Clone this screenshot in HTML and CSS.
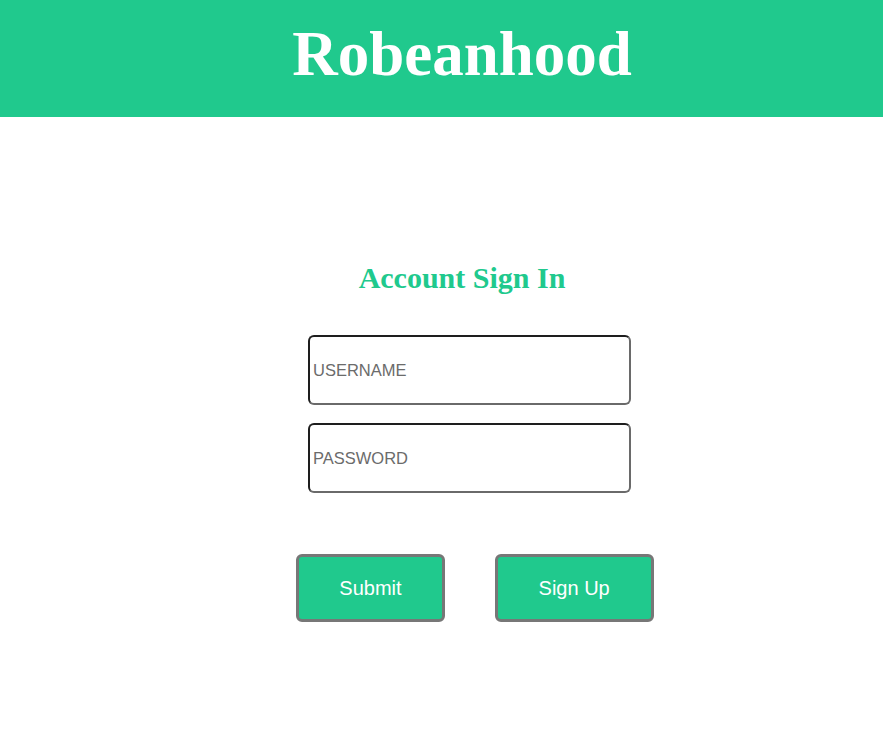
FILE: index.html
```html
<!DOCTYPE html>
<html lang="en">
<head>
<meta charset="utf-8">
<title>Robeanhood</title>
<link rel="stylesheet" href="styles.css">
</head>
<body>
<header class="banner">
  <h1 class="brand">Robeanhood</h1>
</header>
<main class="signin">
  <h2 class="signin-title">Account Sign In</h2>
  <form class="signin-form">
    <div class="fields">
      <input class="field" type="text" placeholder="USERNAME">
      <input class="field" type="password" placeholder="PASSWORD">
    </div>
    <div class="actions">
      <button class="btn" type="button">Submit</button>
      <button class="btn btn-wide" type="button">Sign Up</button>
    </div>
  </form>
</main>
</body>
</html>
```

FILE: styles.css
```css
html, body {
  margin: 0;
  padding: 0;
  background: #ffffff;
}

body {
  font-family: "Liberation Sans", Arial, sans-serif;
}

.banner {
  height: 117px;
  background: #20c98d;
  display: flex;
  align-items: center;
  justify-content: center;
  padding-left: 41px;
  box-sizing: border-box;
}

.brand {
  margin: 0;
  font-family: "Liberation Serif", "Times New Roman", serif;
  font-weight: bold;
  font-size: 63px;
  line-height: 1;
  color: #ffffff;
  position: relative;
  top: -4px;
}

.signin {
  display: flex;
  flex-direction: column;
  align-items: center;
  padding-left: 41px;
}

.signin-title {
  margin: 144px 0 0;
  font-family: "Liberation Serif", "Times New Roman", serif;
  font-weight: bold;
  font-size: 30px;
  line-height: 34px;
  color: #20c98d;
}

.signin-form {
  display: flex;
  flex-direction: column;
  align-items: center;
}

.fields {
  display: flex;
  flex-direction: column;
  gap: 18px;
  margin-top: 40px;
  margin-left: 15px;
}

.field {
  width: 323px;
  height: 70px;
  box-sizing: border-box;
  border: 2px solid;
  border-color: #1e1e1e #6a6a6a #6a6a6a #1e1e1e;
  border-radius: 6px;
  padding: 0 3px;
  font-family: "Liberation Sans", Arial, sans-serif;
  font-size: 16.5px;
  color: #333;
  background: #fff;
  outline: none;
}

.field::placeholder {
  color: #6b6b6b;
  opacity: 1;
}

.actions {
  display: flex;
  gap: 50px;
  margin-top: 61px;
  margin-left: 26px;
}

.btn {
  height: 68px;
  box-sizing: border-box;
  padding: 0 40px;
  border: 3px solid #777777;
  border-radius: 6px;
  background: #20c98d;
  color: #ffffff;
  font-family: "Liberation Sans", Arial, sans-serif;
  font-size: 20px;
  cursor: pointer;
}

.btn-wide {
  padding: 0 41px;
}
```
